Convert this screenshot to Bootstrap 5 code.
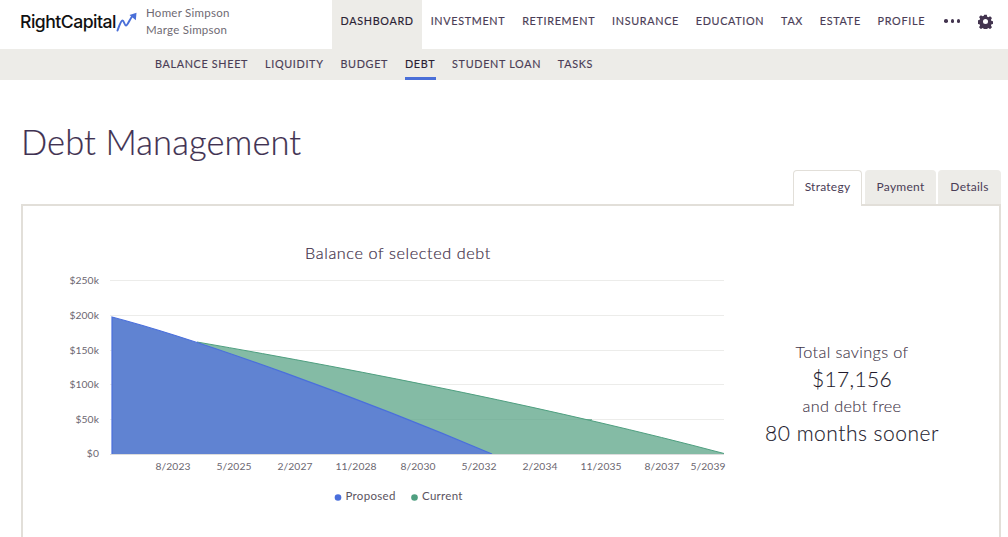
<!DOCTYPE html>
<html lang="en">
<head>
<meta charset="utf-8">
<title>Debt Management</title>
<link href="https://cdn.jsdelivr.net/npm/bootstrap@5.3.0/dist/css/bootstrap.min.css" rel="stylesheet">
<style>
html,body{height:537px;overflow:hidden}
body{font-family:Lato,"Liberation Sans",sans-serif;color:#43344f;background:#fff}
.topbar{height:49px}
.brand-block{padding-left:20px;padding-bottom:6px;flex:0 0 332px}
.brand-name{font-family:Inter,"Liberation Sans",sans-serif;font-size:17.6px;font-weight:500;color:#111;letter-spacing:-.5px;line-height:1}
.people{font-size:11.5px;line-height:16.5px;color:#6f6a73;margin-left:8px;letter-spacing:.25px;font-weight:400}
.main-nav .nav-link,.sub-nav .nav-link{font-size:10.8px;font-weight:400;letter-spacing:.68px;-webkit-text-stroke:.15px currentColor;color:#4a3d56;text-transform:uppercase;white-space:nowrap;padding:0 8.4px}
.main-nav .nav-link{height:49px;line-height:42px}
.main-nav .nav-link.active{background:#edece8;color:#2a2233;padding:0 8.5px}
.more-dots{display:flex;gap:2.6px;margin-left:11px;margin-right:18px;align-items:center;height:42px}
.more-dots i{width:3.6px;height:3.6px;border-radius:50%;background:#43344f;display:block}
.gear{margin-top:14px}
.subbar{height:31px;background:#edece8;padding-left:146.5px}
.sub-nav .nav-link{height:31px;line-height:30px}
.sub-nav .nav-link.active{color:#2a2233;position:relative}
.sub-nav .nav-link.active::after{content:"";position:absolute;left:8px;right:8px;bottom:0;height:3px;background:#4a6fd8}
.page-title{font-size:34.5px;font-weight:300;color:#3f3151;letter-spacing:.1px;-webkit-text-stroke:.2px currentColor;margin:0;padding:41px 0 0 21px;line-height:42px}
.tab-row{padding-right:7px;margin-top:7px;height:34px;border:0;gap:2px;position:relative;z-index:1}
.tab-row .nav-link{font-size:12px;letter-spacing:.25px;color:#4a3d56;background:#edece8;border:1px solid #edece8;border-bottom:0;border-radius:4px 4px 0 0;height:34px;line-height:32px;padding:0;margin:0;text-align:center}
.tab-row .tab-a{width:69px;margin-right:1px}
.tab-row .tab-b{width:71px}
.tab-row .tab-c{width:63px}
.tab-row .nav-link.active{background:#fff;border-color:#e2dfd9;color:#4a3d56;height:36px}
.chart-card{margin:0 7px 0 21px;border:2px solid #e2dfd9;border-bottom:0;border-radius:0;height:340px;background:#fff}
.chart-box{width:719px}
.chart-box svg{display:block}
.c-title{font-size:16.200px;fill:#3f3049;stroke:#3f3049;stroke-width:.2px;letter-spacing:.62px;font-weight:300}
.c-axis{font-size:10.3px;fill:#6b6670;letter-spacing:.1px}
.c-legend{font-size:11.5px;fill:#5a5360;letter-spacing:.3px}
.savings{width:220px;color:#3d3049;text-align:center;padding-top:132px;-webkit-text-stroke:.12px currentColor}
.sv-line{line-height:27px}
.sv-a{font-size:16.300px;letter-spacing:.35px;color:#3f3548;font-weight:300}
.sv-b{font-size:21px;letter-spacing:.3px;color:#221a2c;font-weight:300}
.sv-d{font-size:21px;letter-spacing:.5px;color:#221a2c;font-weight:300}
</style>
</head>
<body>
<header class="topbar d-flex align-items-stretch">
  <div class="brand-block d-flex align-items-center">
    <span class="brand-name">RightCapital</span>
    <svg width="22" height="20" viewBox="0 0 22 20" class="flex-shrink-0" aria-hidden="true"><path d="M1.500 18.500C3.500 13 5 8.500 6.500 8.500S8.500 13.500 10 13.500 13.500 8 16 4.500" fill="none" stroke="#4a6fd8" stroke-width="2" stroke-linecap="round"/><path d="M13.500 3 20.500 .8 19.800 8.200Z" fill="#4a6fd8"/></svg>
    <div class="people"><div>Homer Simpson</div><div>Marge Simpson</div></div>
  </div>
  <nav class="nav main-nav flex-nowrap align-items-start">
    <a class="nav-link active" href="#">Dashboard</a>
    <a class="nav-link" href="#">Investment</a>
    <a class="nav-link" href="#">Retirement</a>
    <a class="nav-link" href="#">Insurance</a>
    <a class="nav-link" href="#">Education</a>
    <a class="nav-link" href="#">Tax</a>
    <a class="nav-link" href="#">Estate</a>
    <a class="nav-link" href="#">Profile</a>
  </nav>
  <div class="more-dots"><i></i><i></i><i></i></div>
  <svg class="gear flex-shrink-0" width="15" height="15" viewBox="0 0 16 16" aria-hidden="true"><path fill="#43344f" fill-rule="evenodd" d="M6.600.8h2.800l.4 2 1.300.6 1.800-1.100 2 2-1.100 1.800.6 1.300 2 .4v2.800l-2 .4-.6 1.300 1.100 1.800-2 2-1.800-1.100-1.300.6-.4 2H6.600l-.4-2-1.300-.6-1.800 1.100-2-2 1.100-1.800-.6-1.300-2-.4V6.800l2-.4.6-1.300-1.100-1.800 2-2 1.800 1.100 1.300-.6zM8 5.300a2.700 2.700 0 1 0 0 5.400 2.700 2.700 0 0 0 0-5.400z"/></svg>
</header>
<div class="subbar">
  <nav class="nav sub-nav flex-nowrap">
    <a class="nav-link" href="#">Balance Sheet</a>
    <a class="nav-link" href="#">Liquidity</a>
    <a class="nav-link" href="#">Budget</a>
    <a class="nav-link active" href="#">Debt</a>
    <a class="nav-link" href="#">Student Loan</a>
    <a class="nav-link" href="#">Tasks</a>
  </nav>
</div>
<h1 class="page-title">Debt Management</h1>
<ul class="nav nav-tabs tab-row justify-content-end">
  <li class="nav-item"><a class="nav-link tab-a active" href="#">Strategy</a></li>
  <li class="nav-item"><a class="nav-link tab-b" href="#">Payment</a></li>
  <li class="nav-item"><a class="nav-link tab-c" href="#">Details</a></li>
</ul>
<section class="chart-card d-flex align-items-start">
  <div class="chart-box flex-shrink-0">
    <svg width="719" height="300" viewBox="23 206 719 300" role="img" aria-label="Balance of selected debt">
      <text class="c-title" x="398" y="258.500" text-anchor="middle">Balance of selected debt</text>
      <g stroke="#ececea" stroke-width="1">
        <line x1="110" x2="724" y1="280.500" y2="280.500"/><line x1="110" x2="724" y1="315.500" y2="315.500"/><line x1="110" x2="724" y1="350.500" y2="350.500"/><line x1="110" x2="724" y1="384.500" y2="384.500"/><line x1="110" x2="724" y1="419.500" y2="419.500"/>
      </g>
      <path d="M197 342C370 372 560 410 724 453.500V454H300Z" fill="#84bba5"/>
      <line x1="400" x2="592" y1="419.500" y2="419.500" stroke="#7fb6a0"/>
      <path d="M197 342C370 372 560 410 724 453.500" fill="none" stroke="#4f9f80" stroke-width="1"/>
      <path d="M112 317C200 340 360 398 492 454H112Z" fill="#6083d2"/>
      <path d="M112 454V317C200 340 360 398 492 454" fill="none" stroke="#4a6fdc" stroke-width="1.200"/>
      <line x1="110" x2="724" y1="454.500" y2="454.500" stroke="#dcdcdc"/>
      <g text-anchor="end">
        <text class="c-axis" x="99" y="284">$250k</text><text class="c-axis" x="99" y="319">$200k</text><text class="c-axis" x="99" y="354">$150k</text><text class="c-axis" x="99" y="388">$100k</text><text class="c-axis" x="99" y="423">$50k</text><text class="c-axis" x="99" y="457">$0</text>
      </g>
      <g text-anchor="middle">
        <text class="c-axis" x="173" y="470">8/2023</text><text class="c-axis" x="234" y="470">5/2025</text><text class="c-axis" x="295" y="470">2/2027</text><text class="c-axis" x="356" y="470">11/2028</text><text class="c-axis" x="418" y="470">8/2030</text><text class="c-axis" x="479" y="470">5/2032</text><text class="c-axis" x="540" y="470">2/2034</text><text class="c-axis" x="601" y="470">11/2035</text><text class="c-axis" x="662" y="470">8/2037</text><text class="c-axis" x="708" y="470">5/2039</text>
      </g>
      <circle cx="338" cy="497.500" r="3.300" fill="#4a6fdc"/>
      <text class="c-legend" x="345.500" y="500">Proposed</text>
      <circle cx="414.500" cy="497.500" r="3.300" fill="#4f9f80"/>
      <text class="c-legend" x="422" y="500">Current</text>
    </svg>
  </div>
  <div class="savings flex-shrink-0">
    <div class="sv-line sv-a">Total savings of</div>
    <div class="sv-line sv-b">$17,156</div>
    <div class="sv-line sv-a">and debt free</div>
    <div class="sv-line sv-d">80 months sooner</div>
  </div>
</section>
<script src="https://cdn.jsdelivr.net/npm/bootstrap@5.3.0/dist/js/bootstrap.bundle.min.js"></script>
</body>
</html>
